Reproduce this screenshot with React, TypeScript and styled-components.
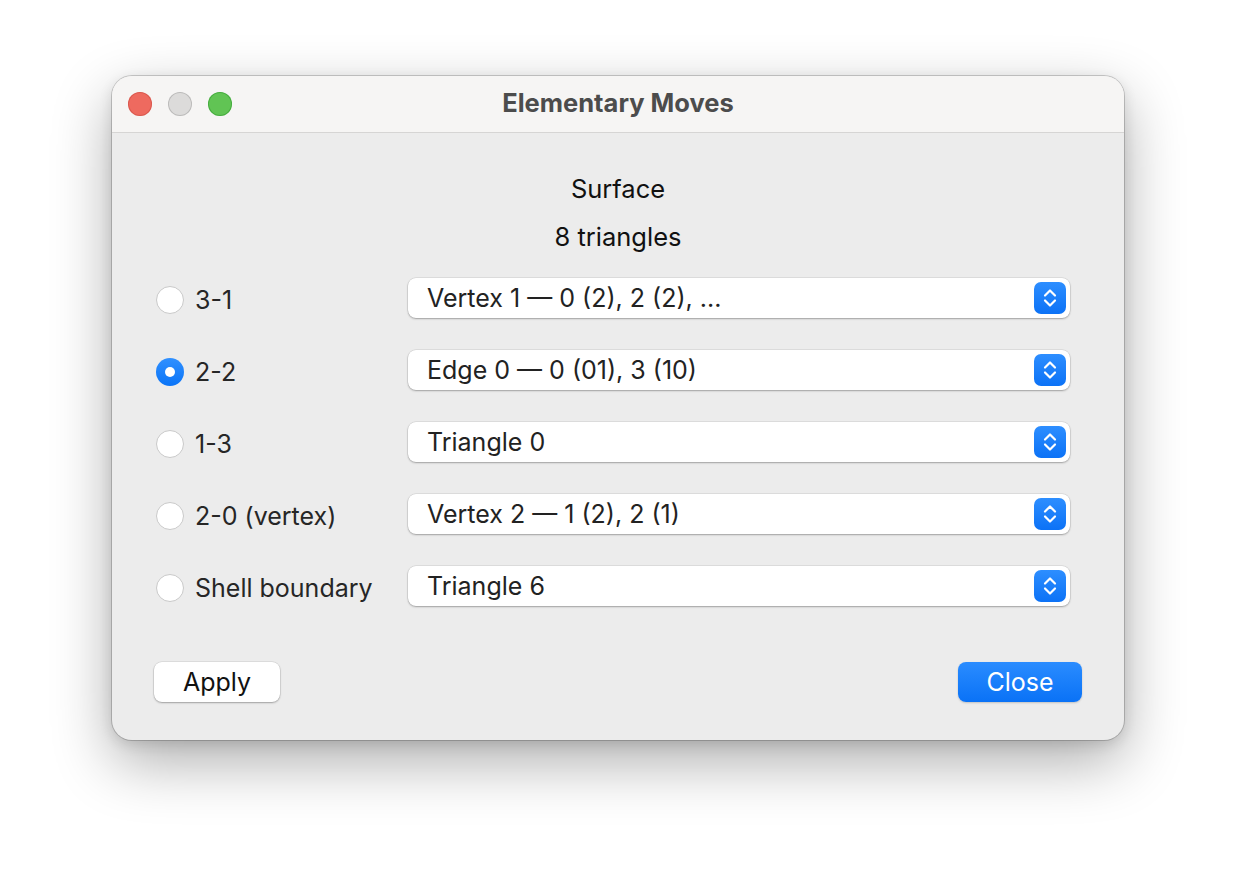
import React, { useState } from "react";
import styled, { createGlobalStyle } from "styled-components";

const Global = createGlobalStyle`
  html, body { margin: 0; padding: 0; background: #ffffff; }
  body { font-family: Inter, "Noto Sans", "Liberation Sans", sans-serif; }
`;

const Page = styled.div`
  width: 1236px;
  height: 888px;
  padding: 76px 0 0 112px;
  box-sizing: border-box;
`;

const Window = styled.div`
  width: 1012px;
  height: 664px;
  border-radius: 20px;
  background: #ececec;
  box-shadow: 0 0 0 1px rgba(0, 0, 0, 0.18), 0 22px 60px rgba(0, 0, 0, 0.32),
    0 4px 14px rgba(0, 0, 0, 0.12);
  overflow: hidden;
  display: flex;
  flex-direction: column;
`;

const TitleBar = styled.div`
  height: 56px;
  flex: none;
  background: #f6f5f4;
  border-bottom: 1px solid #d6d5d4;
  display: flex;
  align-items: center;
  position: relative;
`;

const Lights = styled.div`
  display: flex;
  gap: 16px;
  padding-left: 16px;
`;

const Light = styled.span<{ $c: string; $b: string }>`
  width: 24px;
  height: 24px;
  border-radius: 50%;
  background: ${(p) => p.$c};
  box-shadow: inset 0 0 0 1px ${(p) => p.$b};
`;

const Title = styled.div`
  position: absolute;
  left: 0;
  right: 0;
  top: 12px;
  line-height: 30px;
  text-align: center;
  font-weight: 700;
  font-size: 25.5px;
  color: #4c4c4c;
  pointer-events: none;
`;

const Body = styled.div`
  flex: 1;
  display: flex;
  flex-direction: column;
`;

const Heading = styled.div<{ $top: number }>`
  text-align: center;
  font-size: 25.5px;
  line-height: 30px;
  color: #111;
  margin-top: ${(p) => p.$top}px;
`;

const Rows = styled.div`
  display: grid;
  grid-template-columns: 252px 662px;
  row-gap: 32px;
  padding: 26px 0 0 44px;
`;

const Choice = styled.label`
  display: flex;
  align-items: center;
  gap: 11px;
  margin-top: 4px;
  cursor: default;
`;

const Radio = styled.span<{ $on: boolean }>`
  width: 28px;
  height: 28px;
  flex: none;
  border-radius: 50%;
  box-sizing: border-box;
  display: flex;
  align-items: center;
  justify-content: center;
  background: ${(p) => (p.$on ? "linear-gradient(#3090ff, #0a74f7)" : "#ffffff")};
  border: ${(p) => (p.$on ? "none" : "1px solid #c9c9c9")};
  &::after {
    content: "";
    width: 10px;
    height: 10px;
    border-radius: 50%;
    background: #fff;
    display: ${(p) => (p.$on ? "block" : "none")};
  }
`;

const Label = styled.span`
  font-size: 25px;
  color: #262626;
  white-space: nowrap;
`;

const Combo = styled.div`
  height: 40px;
  border-radius: 8px;
  background: #ffffff;
  box-shadow: 0 0 0 0.5px rgba(0, 0, 0, 0.12), 0 1px 2px rgba(0, 0, 0, 0.28);
  display: flex;
  align-items: center;
  padding: 0 4px 0 19px;
  box-sizing: border-box;
`;

const ComboText = styled.span`
  flex: 1;
  font-size: 25px;
  color: #222;
  white-space: nowrap;
`;

const Stepper = styled.span`
  width: 32px;
  height: 32px;
  border-radius: 7px;
  background: linear-gradient(#2d8eff, #0c72f6);
  display: flex;
  align-items: center;
  justify-content: center;
`;

const Buttons = styled.div`
  display: flex;
  justify-content: space-between;
  padding: 56px 42px 0 42px;
`;

const Button = styled.button<{ $primary?: boolean; $w: number }>`
  width: ${(p) => p.$w}px;
  height: 40px;
  border: none;
  border-radius: 8px;
  font-family: inherit;
  font-size: 25px;
  color: ${(p) => (p.$primary ? "#fff" : "#111")};
  background: ${(p) => (p.$primary ? "linear-gradient(#2a8cff, #0a72f6)" : "#ffffff")};
  box-shadow: ${(p) =>
    p.$primary
      ? "0 1px 2px rgba(0,0,0,0.18)"
      : "0 0 0 0.5px rgba(0,0,0,0.12), 0 1px 2px rgba(0,0,0,0.28)"};
  padding: 0;
`;

const Chevrons = () => (
  <svg width="18" height="24" viewBox="0 0 18 24" fill="none">
    <path d="M4 9.5 L9 4.5 L14 9.5" stroke="#fff" strokeWidth="2.2" strokeLinecap="round" strokeLinejoin="round" />
    <path d="M4 14.5 L9 19.5 L14 14.5" stroke="#fff" strokeWidth="2.2" strokeLinecap="round" strokeLinejoin="round" />
  </svg>
);

const moves = [
  { label: "3-1", value: "Vertex 1 — 0 (2), 2 (2), ..." },
  { label: "2-2", value: "Edge 0 — 0 (01), 3 (10)" },
  { label: "1-3", value: "Triangle 0" },
  { label: "2-0 (vertex)", value: "Vertex 2 — 1 (2), 2 (1)" },
  { label: "Shell boundary", value: "Triangle 6" },
];

export default function App() {
  const [sel, setSel] = useState(1);
  return (
    <Page>
      <Global />
      <Window>
        <TitleBar>
          <Lights>
            <Light $c="#ee6a5f" $b="rgba(200,70,60,0.5)" />
            <Light $c="#dcdbda" $b="rgba(0,0,0,0.15)" />
            <Light $c="#61c454" $b="rgba(40,150,40,0.5)" />
          </Lights>
          <Title>Elementary Moves</Title>
        </TitleBar>
        <Body>
          <Heading $top={41}>Surface</Heading>
          <Heading $top={18}>8 triangles</Heading>
          <Rows>
            {moves.map((m, i) => (
              <React.Fragment key={m.label}>
                <Choice onClick={() => setSel(i)}>
                  <Radio $on={sel === i} />
                  <Label>{m.label}</Label>
                </Choice>
                <Combo>
                  <ComboText>{m.value}</ComboText>
                  <Stepper>
                    <Chevrons />
                  </Stepper>
                </Combo>
              </React.Fragment>
            ))}
          </Rows>
          <Buttons>
            <Button $w={126}>Apply</Button>
            <Button $primary $w={124}>Close</Button>
          </Buttons>
        </Body>
      </Window>
    </Page>
  );
}
